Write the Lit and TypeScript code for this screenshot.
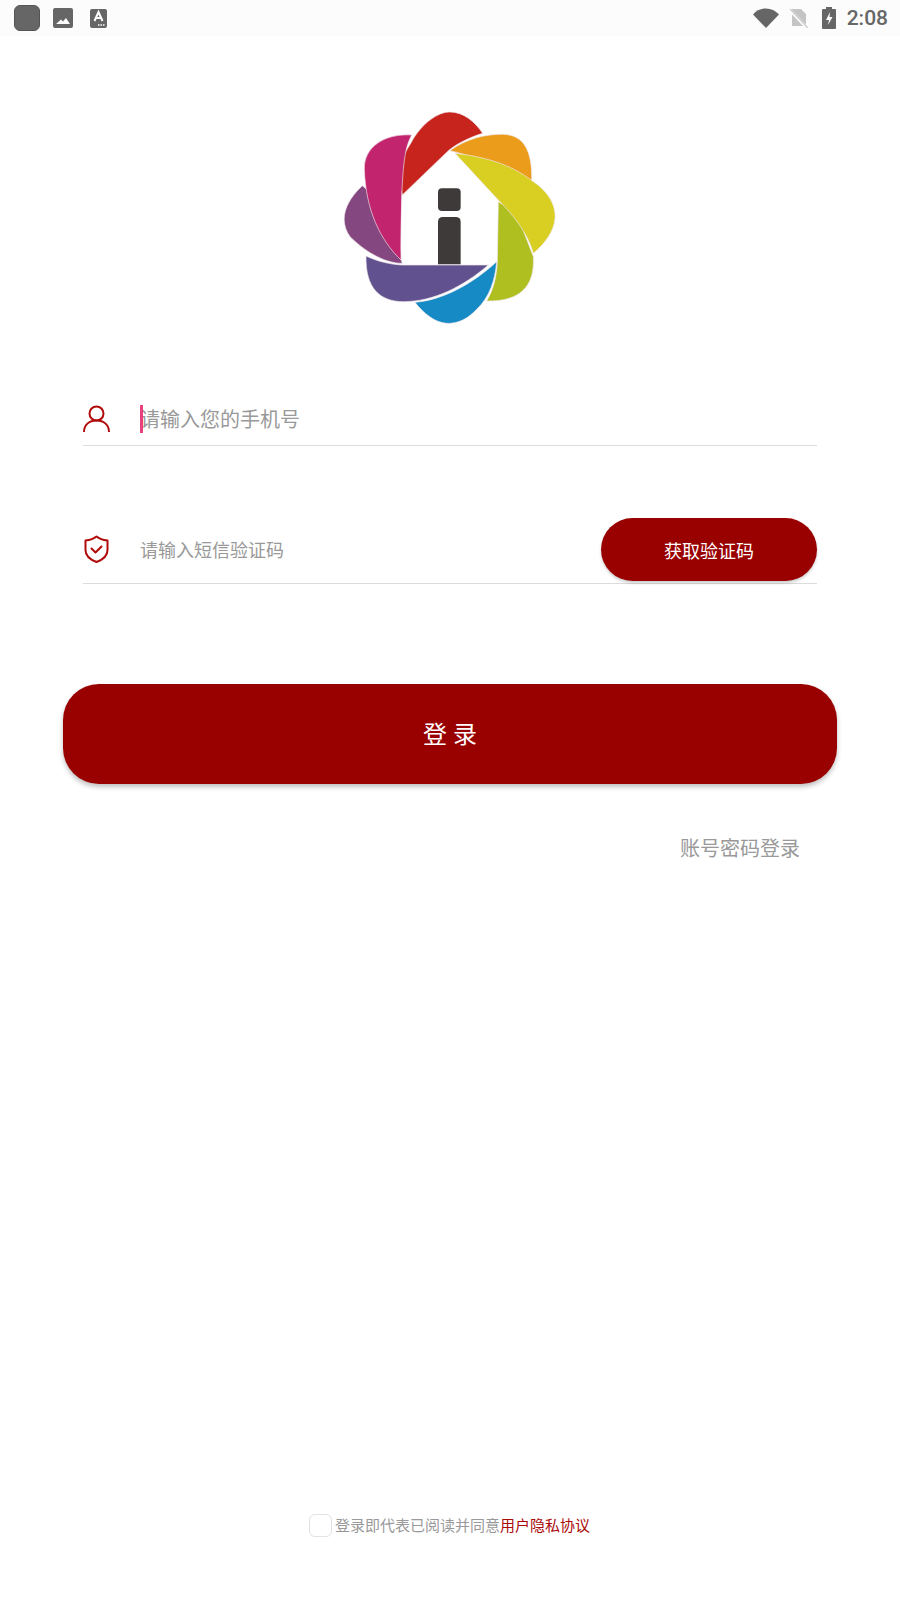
import { LitElement, html, css } from "lit";
import { customElement } from "lit/decorators.js";

@customElement("app-root")
export class AppRoot extends LitElement {
  static styles = css`
    :host { display: block; width: 900px; height: 1600px; background: #fff; font-family: "Noto Sans CJK SC", "Noto Sans", sans-serif; overflow: hidden; }
    .page { display: flex; flex-direction: column; height: 1600px; }
    .status { height: 36px; flex: none; background: #fcfcfc; display: flex; align-items: center; padding: 0 12px 0 14px; box-sizing: border-box; }
    .status svg { display: block; flex: none; }
    .app { width: 26px; height: 26px; border-radius: 6px; background: #666; border: 1px solid #555; box-sizing: border-box; margin-right: 13px; }
    .img { margin-right: 17px; }
    .spacer { flex: 1; }
    .wifi { margin-right: 11px; }
    .sim { margin-right: 14px; }
    .batt { margin-right: 11px; }
    .time { font: 500 21px/1 Roboto, sans-serif; color: #666; }
    .logo { display: block; margin: 64px auto 0; width: 240px; height: 240px; flex: none; }
    .form { margin: 0 83px; display: flex; flex-direction: column; }
    .row { display: flex; align-items: center; border-bottom: 1px solid #dcdcdc; box-sizing: border-box; }
    .row1 { height: 60px; margin-top: 46px; }
    .row2 { height: 76px; margin-top: 62px; align-items: flex-start; }
    .icon { width: 27px; flex: none; display: block; margin-right: 32px; }
    .row1 .icon { margin-top: 6px; }
    .ph1 { position: relative; font-size: 20px; line-height: 28px; color: #999; margin-top: 6px; margin-left: -2px; }
    .caret { position: absolute; left: 0; top: 0; width: 3px; height: 28px; background: #e8417f; }
    .ph2 { flex: 1; font-size: 18px; line-height: 26px; color: #999; margin-top: 28px; margin-left: -2px; }
    .row2 .icon { margin-top: 27px; }
    .code { width: 216px; height: 63px; border-radius: 32px; background: #990000; color: #fff; font-size: 18px; display: flex; align-items: center; justify-content: center; box-shadow: 0 2px 3px rgba(0,0,0,.2); margin-top: 10px; }
    .login { margin: 100px 63px 0; height: 100px; border-radius: 36px; background: #990000; color: #fff; font-size: 24px; letter-spacing: 6px; padding: 0 0 4px 6px; box-sizing: border-box; display: flex; align-items: center; justify-content: center; box-shadow: 0 3px 5px rgba(0,0,0,.25); flex: none; }
    .pwd { align-self: flex-end; margin: 49px 100px 0 0; font-size: 20px; line-height: 30px; color: #999; }
    .terms { margin-top: auto; margin-bottom: 63px; display: flex; align-items: center; justify-content: center; font-size: 15px; line-height: 24px; color: #999; padding-right: 1px; }
    .check { width: 23px; height: 23px; box-sizing: border-box; border: 1px solid #e2e2e2; border-radius: 6px; margin-right: 3px; background: #fff; }
    .link { color: #aa0a0a; }
  `;

  render() {
    return html`<div class="page">
      <div class="status">
        <div class="app"></div>
        <svg class="img" width="20" height="20" viewBox="0 0 20 20"><path fill="#666" fill-rule="evenodd" d="M2 0H18a2 2 0 0 1 2 2V18a2 2 0 0 1-2 2H2a2 2 0 0 1-2-2V2a2 2 0 0 1 2-2ZM3 16H17L13 10 10 13.5 8 11.5Z"/></svg>
        <svg width="17" height="19" viewBox="0 0 17 19"><path fill="#666" d="M2 0H15a2 2 0 0 1 2 2V17a2 2 0 0 1-2 2H2a2 2 0 0 1-2-2V2a2 2 0 0 1 2-2Z"/><path fill="none" stroke="#fff" stroke-width="2" d="M4.5 12 8.5 3 12.5 12M5.8 9H11.200"/><path stroke="#fff" stroke-width="1.500" stroke-dasharray="1.500 1" d="M8 16H15"/></svg>
        <div class="spacer"></div>
        <svg class="wifi" width="26" height="20" viewBox="0 0 26 20"><path fill="#666" d="M0 6.500C3.500 2.500 8 0.500 13 0.500S22.500 2.500 26 6.500L13 20Z"/></svg>
        <svg class="sim" width="18" height="20" viewBox="0 0 18 20"><path fill="#c4c4c4" d="M2 1H11L16 6V18H2Z"/><path stroke="#fcfcfc" stroke-width="3" d="M0 2 17 20"/><path stroke="#c4c4c4" stroke-width="1.200" d="M0 1 18 20"/></svg>
        <svg class="batt" width="14" height="22" viewBox="0 0 14 22"><path fill="#666" d="M4 0H10V2H13a1 1 0 0 1 1 1V21a1 1 0 0 1-1 1H1a1 1 0 0 1-1-1V3a1 1 0 0 1 1-1H4Z"/><path fill="#fcfcfc" d="M8 5 4 13H7L6 18 10.500 10H7.500Z"/></svg>
        <div class="time">2:08</div>
      </div>
      <svg class="logo" viewBox="0 0 720 720">
        <g stroke="#efe6ec" stroke-width="2" stroke-linejoin="round">
          <path fill="#ea9c1a" d="M360 152C410 115 470 102 520 103C580 105 607 150 605 240L560 260C500 200 440 170 360 152Z"/>
          <path fill="#afbf20" d="M505 305L560 340 610 470C615 560 570 605 470 603C490 570 500 530 502 485Z"/>
          <path fill="#d9ce22" d="M375 160C460 170 540 190 610 245C650 272 678 310 675 355C672 395 645 430 610 460C595 405 555 350 505 300Z"/>
          <path fill="#168ac4" d="M500 485C495 540 480 590 440 628C415 655 385 672 350 670C315 668 280 640 255 607C340 600 430 550 500 485Z"/>
          <path fill="#61518f" d="M108 468C145 485 180 493 215 495H475C400 560 310 605 220 605C150 605 106 565 108 468Z"/>
          <path fill="#84477f" d="M97 257L150 300 217 490C160 490 100 450 60 410C28 365 40 310 97 257Z"/>
          <path fill="#c8241e" d="M217 285L200 200 245 125C275 70 325 35 360 36C400 36 435 65 458 100C420 112 385 128 355 152Z"/>
          <path fill="#c2246e" d="M245 105C222 150 213 200 213 480C150 420 108 330 103 210C100 140 165 100 245 105Z"/>
        </g>
        <rect x="324" y="265" width="68" height="68" rx="12" fill="#3e3a39"/>
        <path fill="#3e3a39" d="M324 493V365a14 14 0 0 1 14-14H378a14 14 0 0 1 14 14V493Z"/>
      </svg>
      <div class="form">
        <div class="row row1">
          <svg class="icon" width="27" height="27" viewBox="0 0 27 27" fill="none" stroke="#b00a0a" stroke-width="2"><circle cx="13.500" cy="8.500" r="7"/><path d="M1 27C1 20 6 15.500 13.500 15.500S26 20 26 27"/></svg>
          <div class="ph1"><span class="caret"></span>请输入您的手机号</div>
        </div>
        <div class="row row2">
          <svg class="icon" width="27" height="28" viewBox="0 0 27 28" fill="none" stroke="#b00a0a" stroke-width="2" stroke-linejoin="round" stroke-linecap="round"><path d="M13.500 1.500C16.500 4 20 5 24.500 5.500V15C24.500 21 19 25 13.500 27 8 25 2.500 21 2.500 15V5.500C7 5 10.500 4 13.500 1.500Z"/><path d="M8.500 13.500 12.500 17.500 18.500 11.500"/></svg>
          <div class="ph2">请输入短信验证码</div>
          <div class="code">获取验证码</div>
        </div>
      </div>
      <div class="login">登录</div>
      <div class="pwd">账号密码登录</div>
      <div class="terms"><div class="check"></div><span>登录即代表已阅读并同意</span><span class="link">用户隐私协议</span></div>
    </div>`;
  }
}
